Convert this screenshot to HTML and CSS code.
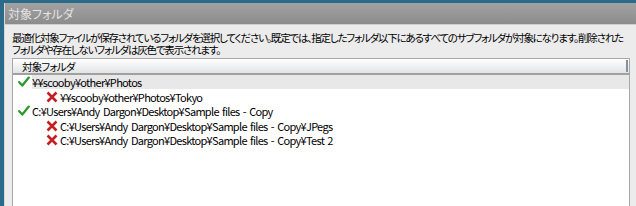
FILE: index.html
```html
<!DOCTYPE html>
<html lang="ja">
<head>
<meta charset="utf-8">
<link rel="stylesheet" href="styles.css">
</head>
<body>
<div class="frame">
  <div class="title">対象フォルダ</div>
  <div class="panel">
    <p class="desc">最適化対象ファイルが保存されているフォルダを選択してください。既定では、指定したフォルダ以下にあるすべてのサブフォルダが対象になります。削除された<br>フォルダや存在しないフォルダは灰色で表示されます。</p>
    <div class="list">
      <div class="head"><span class="head-label">対象フォルダ</span><span class="grip"></span></div>
      <div class="row">
        <svg class="icon" viewBox="0 0 12 12"><path class="check" d="M1.2 6.2 L4.3 9.6 L10.8 1.6"/></svg>
        <span class="label selected">¥¥scooby¥other¥Photos</span>
      </div>
      <div class="row sub">
        <svg class="icon" viewBox="0 0 12 12"><path class="cross" d="M1.5 1.5 L10.5 10.5 M10.5 1.5 L1.5 10.5"/></svg>
        <span class="label">¥¥scooby¥other¥Photos¥Tokyo</span>
      </div>
      <div class="row">
        <svg class="icon" viewBox="0 0 12 12"><path class="check" d="M1.2 6.2 L4.3 9.6 L10.8 1.6"/></svg>
        <span class="label">C:¥Users¥Andy Dargon¥Desktop¥Sample files - Copy</span>
      </div>
      <div class="row sub">
        <svg class="icon" viewBox="0 0 12 12"><path class="cross" d="M1.5 1.5 L10.5 10.5 M10.5 1.5 L1.5 10.5"/></svg>
        <span class="label">C:¥Users¥Andy Dargon¥Desktop¥Sample files - Copy¥JPegs</span>
      </div>
      <div class="row sub">
        <svg class="icon" viewBox="0 0 12 12"><path class="cross" d="M1.5 1.5 L10.5 10.5 M10.5 1.5 L1.5 10.5"/></svg>
        <span class="label">C:¥Users¥Andy Dargon¥Desktop¥Sample files - Copy¥Test 2</span>
      </div>
    </div>
  </div>
</div>
</body>
</html>
```
FILE: styles.css
```css
html, body {
  margin: 0;
  padding: 0;
  height: 206px;
  overflow: hidden;
}
body {
  background: #2a6a8a;
  padding: 3px 0 0 4px;
  box-sizing: border-box;
  font-family: "Noto Sans CJK JP", "Liberation Sans", sans-serif;
  color: #000;
}
.frame {
  height: 203px;
  background: #ececec;
  border-left: 1px solid #d8d8d8;
  display: flex;
  flex-direction: column;
}
.title {
  height: 21px;
  line-height: 21px;
  padding-left: 3px;
  font-size: 12px;
  color: #e4e4e4;
  background: linear-gradient(#a2a2a2, #8c8c8c);
  border-bottom: 1px solid #d0d0d0;
  font-feature-settings: "palt";
  white-space: nowrap;
}
.panel {
  flex: 1;
  padding: 7px 6px 0 7px;
  display: flex;
  flex-direction: column;
}
.desc {
  margin: 0;
  font-size: 10.5px;
  line-height: 12px;
  letter-spacing: -1.2px;
  white-space: nowrap;
  font-feature-settings: "palt";
}
.list {
  flex: 1;
  margin-top: 2px;
  background: #fff;
  border: 1px solid #a8a8a8;
  border-bottom: none;
}
.head {
  height: 14px;
  display: flex;
  align-items: center;
  background: linear-gradient(#ffffff, #e2e4e6);
  border-bottom: 2px solid #a0a0a0;
  padding-left: 9px;
  font-size: 10.5px;
  letter-spacing: -0.8px;
  font-feature-settings: "palt";
}
.head-label {
  flex: 1;
}
.grip {
  width: 2px;
  height: 12px;
  background: #8890a0;
  margin-right: 1px;
}
.row {
  height: 14.5px;
  display: flex;
  align-items: center;
  padding-left: 5px;
}
.row.sub {
  padding-left: 33px;
}
.icon {
  width: 12px;
  height: 12px;
  margin-right: 2px;
  flex: none;
}
.check {
  fill: none;
  stroke: #2c9a2c;
  stroke-width: 2.3;
  stroke-linecap: round;
  stroke-linejoin: round;
}
.cross {
  fill: none;
  stroke: #c42024;
  stroke-width: 2.6;
}
.label {
  flex: 1;
  height: 14px;
  line-height: 14px;
  font-size: 11px;
  letter-spacing: -0.7px;
  word-spacing: 1.5px;
  white-space: nowrap;
}
.selected {
  background: #e8e8e8;
}
```
